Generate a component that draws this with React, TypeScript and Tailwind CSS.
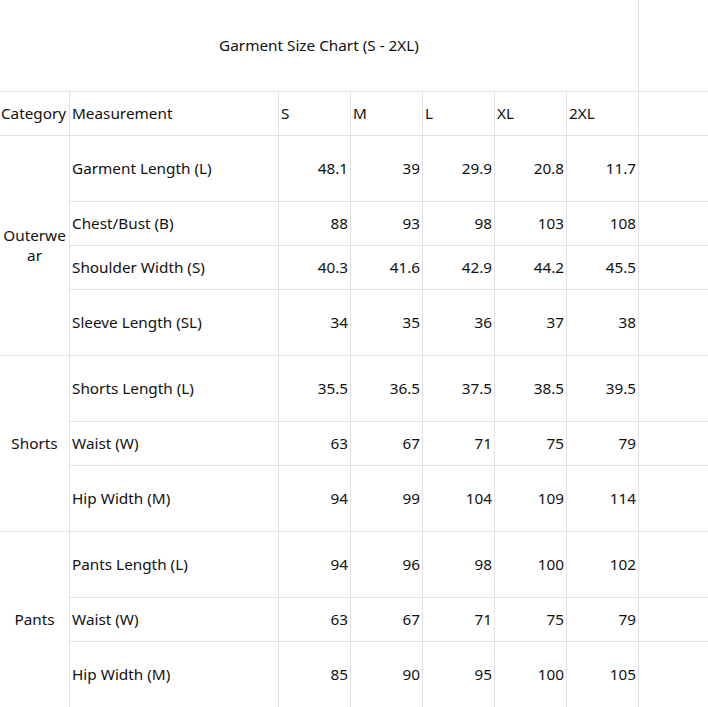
const sizes = ["S", "M", "L", "XL", "2XL"];

type Row = { name: string; values: string[]; tall: boolean };
type Group = { category: string; rows: Row[] };

const groups: Group[] = [
  {
    category: "Outerwear",
    rows: [
      { name: "Garment Length (L)", values: ["48.1", "39", "29.9", "20.8", "11.7"], tall: true },
      { name: "Chest/Bust (B)", values: ["88", "93", "98", "103", "108"], tall: false },
      { name: "Shoulder Width (S)", values: ["40.3", "41.6", "42.9", "44.2", "45.5"], tall: false },
      { name: "Sleeve Length (SL)", values: ["34", "35", "36", "37", "38"], tall: true },
    ],
  },
  {
    category: "Shorts",
    rows: [
      { name: "Shorts Length (L)", values: ["35.5", "36.5", "37.5", "38.5", "39.5"], tall: true },
      { name: "Waist (W)", values: ["63", "67", "71", "75", "79"], tall: false },
      { name: "Hip Width (M)", values: ["94", "99", "104", "109", "114"], tall: true },
    ],
  },
  {
    category: "Pants",
    rows: [
      { name: "Pants Length (L)", values: ["94", "96", "98", "100", "102"], tall: true },
      { name: "Waist (W)", values: ["63", "67", "71", "75", "79"], tall: false },
      { name: "Hip Width (M)", values: ["85", "90", "95", "100", "105"], tall: true },
    ],
  },
];

const line = "border-[#e1e1e1]";

export default function App() {
  const rowHeights = ["92px", "44px"];
  groups.forEach((g) => g.rows.forEach((r) => rowHeights.push(r.tall ? "66px" : "44px")));

  let rowStart = 3;

  return (
    <div className="w-[708px] h-[707px] overflow-hidden bg-white text-[#111] font-['Noto_Sans',sans-serif] text-[15.3px] leading-tight">
      <div
        className="grid grid-cols-[70px_209px_72px_72px_72px_72px_72px_1fr]"
        style={{ gridTemplateRows: rowHeights.join(" ") }}
      >
        {/* title */}
        <div className={`col-span-7 flex items-center justify-center border-r border-b ${line}`}>
          Garment Size Chart (S - 2XL)
        </div>
        <div className={`border-b ${line}`} />

        {/* header */}
        <div className={`flex items-center justify-center whitespace-nowrap border-r border-b ${line}`}>
          <span className="-ml-[2px]">Category</span>
        </div>
        <div className={`flex items-center pl-[2px] border-r border-b ${line}`}>Measurement</div>
        {sizes.map((s) => (
          <div key={s} className={`flex items-center pl-[2px] border-r border-b ${line}`}>
            {s}
          </div>
        ))}
        <div className={`border-b ${line}`} />

        {groups.map((g) => {
          const start = rowStart;
          rowStart += g.rows.length;
          return [
            <div
              key={g.category}
              className={`col-start-1 flex items-center justify-center text-center break-all px-[1px] border-r border-b ${line}`}
              style={{ gridRow: `${start} / span ${g.rows.length}` }}
            >
              {g.category}
            </div>,
            ...g.rows.map((r, i) => (
              <div key={g.category + r.name} className="contents">
                <div
                  className={`col-start-2 flex items-center pl-[2px] border-r border-b ${line}`}
                  style={{ gridRow: start + i }}
                >
                  {r.name}
                </div>
                {r.values.map((v, j) => (
                  <div
                    key={j}
                    className={`flex items-center justify-end pr-[2px] border-r border-b ${line}`}
                    style={{ gridRow: start + i, gridColumn: j + 3 }}
                  >
                    {v}
                  </div>
                ))}
                <div className={`col-start-8 border-b ${line}`} style={{ gridRow: start + i }} />
              </div>
            )),
          ];
        })}
      </div>
    </div>
  );
}
